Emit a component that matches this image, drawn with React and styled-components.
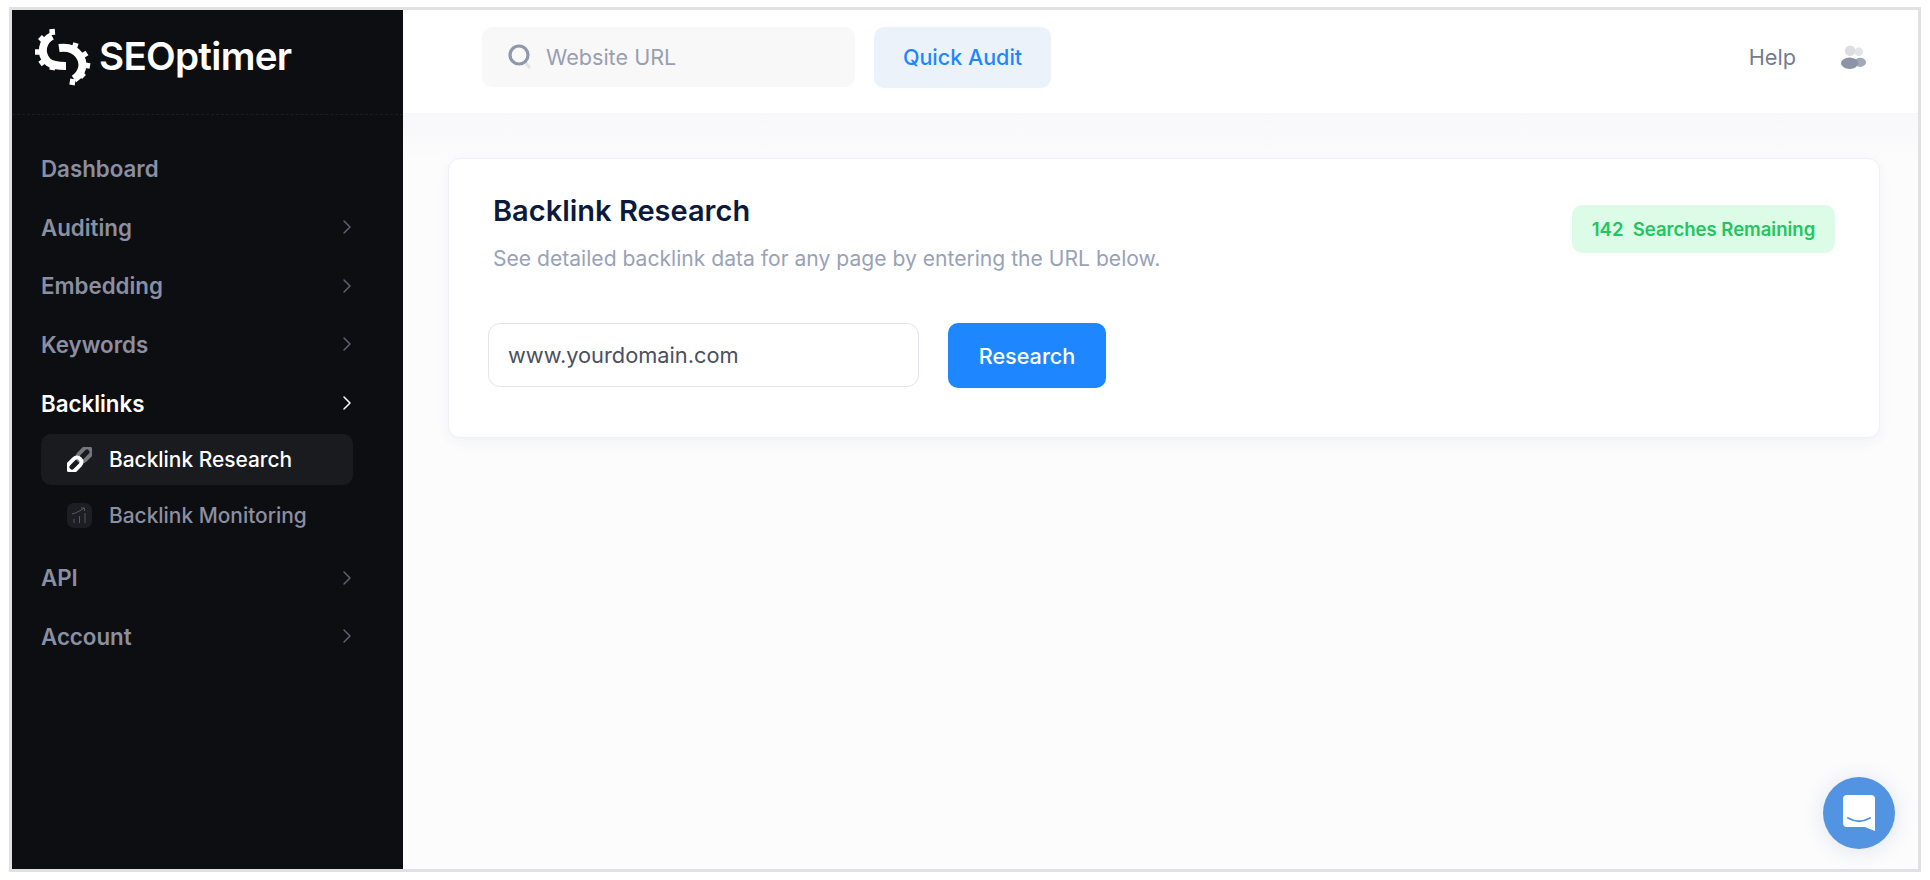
import React from "react";
import styled, { createGlobalStyle } from "styled-components";

const GlobalStyle = createGlobalStyle`
  html, body {
    margin: 0;
    padding: 0;
    background: #fff;
    font-family: Inter, "Liberation Sans", sans-serif;
  }
  * {
    box-sizing: border-box;
  }
`;

const navTop = [
  { label: "Dashboard" },
  { label: "Auditing", arrow: true },
  { label: "Embedding", arrow: true },
  { label: "Keywords", arrow: true },
];

const Chevron = ({ color }) => (
  <ChevronSvg viewBox="0 0 10 16" fill="none" stroke={color} strokeWidth="1.5">
    <path d="M2 2l6 6-6 6" strokeLinecap="round" strokeLinejoin="round" />
  </ChevronSvg>
);

const Logo = () => (
  <svg width="66" height="66" viewBox="0 0 66 66" fill="none" stroke="#fff">
    {/* upper left half gear */}
    <path d="M22 13C12 18 10 30 17 38c5 5 13 5 19 5" strokeWidth="8" />
    <path d="M22 6l.5 6M10 14l4 4M5 29h6M10 41l4-3M22 47l1-5" strokeWidth="5.5" />
    {/* lower right half gear */}
    <path d="M29 25c7-1 15 0 20 7 6 8 4 18-5 24" strokeWidth="8" />
    <path d="M46 20l-2 6M57 30l-5 3M60 43l-6-1M54 54l-4-4M42 62l1-6" strokeWidth="5.5" />
  </svg>
);

const LinkIcon = () => (
  <svg width="25" height="25" viewBox="0 0 25 25" fill="none" strokeWidth="4">
    <rect x="13" y="-0.5" width="9" height="16" rx="4.5" transform="rotate(45 17.5 7.5)" stroke="#75777e" />
    <rect x="3" y="9.5" width="9" height="16" rx="4.5" transform="rotate(45 7.5 17.5)" stroke="#fff" />
  </svg>
);

const MonitorIcon = () => (
  <MonitorBox>
    <svg width="17" height="17" viewBox="0 0 17 17" fill="none" stroke="#55575f" strokeWidth="1">
      <path d="M1 7c4-1 8-3 12-6M10 1h3.5v3" />
      <path d="M3 12v4M8.5 9v7M14 6v10" />
    </svg>
  </MonitorBox>
);

const SearchIcon = () => (
  <svg width="24" height="26" viewBox="0 0 24 26" fill="none">
    <path d="M17 18l5 6" stroke="#e1e3e8" strokeWidth="3" />
    <circle cx="11" cy="11" r="9" stroke="#9097a9" strokeWidth="3.2" />
  </svg>
);

const PeopleIcon = () => (
  <svg width="25" height="25" viewBox="0 0 26 25">
    <circle cx="18.5" cy="6.5" r="4.5" fill="#e3e4e8" />
    <ellipse cx="20" cy="17.5" rx="6" ry="4.8" fill="#a3a8b8" />
    <circle cx="9.5" cy="5.5" r="5.5" fill="#dcdde2" />
    <ellipse cx="9" cy="18.5" rx="9" ry="6" fill="#8e94a8" />
  </svg>
);

const ChatIcon = () => (
  <svg width="32" height="36" viewBox="0 0 32 36">
    <path d="M4 0h24a4 4 0 0 1 4 4v32l-10-4H4a4 4 0 0 1-4-4V4a4 4 0 0 1 4-4z" fill="#fff" />
    <path d="M5 23c7 4 15 4 22 0" fill="none" stroke="#5294e2" strokeWidth="2" strokeLinecap="round" />
  </svg>
);

function App() {
  return (
    <>
      <GlobalStyle />
      <Frame>
        <Sidebar>
          <Brand>
            <Logo />
            <BrandName>SEOptimer</BrandName>
          </Brand>
          <Nav>
            {navTop.map((item) => (
              <NavRow key={item.label}>
                {item.label}
                {item.arrow && <Chevron color="#5f6270" />}
              </NavRow>
            ))}
            <NavRow $active>
              Backlinks
              <Chevron color="#fff" />
            </NavRow>
            <SubList>
              <SubRow $active>
                <LinkIcon />
                Backlink Research
              </SubRow>
              <SubRow>
                <MonitorIcon />
                Backlink Monitoring
              </SubRow>
            </SubList>
            <NavRow>
              API
              <Chevron color="#5f6270" />
            </NavRow>
            <NavRow>
              Account
              <Chevron color="#5f6270" />
            </NavRow>
          </Nav>
        </Sidebar>
        <Content>
          <Header>
            <SearchBox>
              <SearchIcon />
              <SearchInput placeholder="Website URL" />
            </SearchBox>
            <AuditButton>Quick Audit</AuditButton>
            <HeaderRight>
              <HelpLink>Help</HelpLink>
              <PeopleIcon />
            </HeaderRight>
          </Header>
          <Main>
            <Card>
              <CardTop>
                <div>
                  <Title>Backlink Research</Title>
                  <Subtitle>See detailed backlink data for any page by entering the URL below.</Subtitle>
                </div>
                <Badge>142&nbsp; Searches Remaining</Badge>
              </CardTop>
              <FormRow>
                <UrlInput placeholder="www.yourdomain.com" />
                <ResearchButton>Research</ResearchButton>
              </FormRow>
            </Card>
          </Main>
          <ChatButton>
            <ChatIcon />
          </ChatButton>
        </Content>
      </Frame>
    </>
  );
}

const Frame = styled.div`
  display: flex;
  width: 1912px;
  height: 865px;
  margin: 7px 0 0 9px;
  border: 3px solid #e1e1e4;
  overflow: hidden;
`;

const Sidebar = styled.aside`
  flex: 0 0 391px;
  background: #0d0e12;
`;

const Brand = styled.div`
  display: flex;
  align-items: center;
  gap: 3px;
  height: 105px;
  padding: 0 0 12px 18px;
  border-bottom: 1px dashed #1b1c20;
`;

const BrandName = styled.span`
  color: #fff;
  font-family: Inter, sans-serif;
  font-size: 38.6px;
  font-weight: 600;
  letter-spacing: -0.7px;
`;

const Nav = styled.nav`
  display: flex;
  flex-direction: column;
  padding: 24px 50px 0 29px;
`;

const NavRow = styled.div`
  display: flex;
  align-items: center;
  justify-content: space-between;
  height: 58.7px;
  color: ${(p) => (p.$active ? "#fff" : "#8b8fa1")};
  font-size: 22.3px;
  font-weight: 600;
`;

const ChevronSvg = styled.svg`
  width: 10px;
  height: 16px;
  margin-right: 1px;
`;

const SubList = styled.div`
  display: flex;
  flex-direction: column;
  gap: 5px;
  margin: 2px 0 7px;
`;

const SubRow = styled.div`
  display: flex;
  align-items: center;
  gap: 17px;
  height: 51px;
  padding-left: 26px;
  border-radius: 10px;
  background: ${(p) => (p.$active ? "#1a1b1f" : "transparent")};
  color: ${(p) => (p.$active ? "#fff" : "#8b8fa1")};
  font-size: 20.9px;
  font-weight: 500;
`;

const MonitorBox = styled.div`
  display: flex;
  align-items: center;
  justify-content: center;
  width: 25px;
  height: 25px;
  border-radius: 7px;
  background: #1d1e23;
`;

const Content = styled.div`
  position: relative;
  flex: 1;
  display: flex;
  flex-direction: column;
  min-width: 0;
`;

const Header = styled.header`
  display: flex;
  align-items: center;
  gap: 19px;
  height: 103px;
  padding: 0 52px 9px 79px;
  background: #fff;
`;

const SearchBox = styled.div`
  display: flex;
  align-items: center;
  gap: 12px;
  width: 373px;
  height: 60px;
  padding-left: 26px;
  border-radius: 10px;
  background: #f8f8f9;
`;

const SearchInput = styled.input`
  flex: 1;
  min-width: 0;
  border: 0;
  outline: 0;
  background: transparent;
  font-family: inherit;
  font-size: 21.6px;
  &::placeholder {
    color: #989fb1;
    opacity: 1;
  }
`;

const AuditButton = styled.button`
  width: 177px;
  height: 61px;
  border: 0;
  border-radius: 10px;
  background: #ebf2fa;
  color: #1e87ff;
  font-family: inherit;
  font-size: 21.5px;
  font-weight: 500;
`;

const HeaderRight = styled.div`
  display: flex;
  align-items: center;
  gap: 45px;
  margin-left: auto;
`;

const HelpLink = styled.span`
  color: #747c91;
  font-size: 21.7px;
`;

const Main = styled.main`
  flex: 1;
  padding: 45px 38px 0 45px;
  background: linear-gradient(#f8f8fa 0, #fcfcfd 50px);
`;

const Card = styled.section`
  height: 280px;
  padding: 34px 44px 0 39px;
  border: 1px solid #eef1f6;
  border-radius: 12px;
  background: #fff;
  box-shadow: 0 4px 14px rgba(40, 50, 90, 0.05);
`;

const CardTop = styled.div`
  display: flex;
  align-items: flex-start;
  justify-content: space-between;
  padding-left: 5px;
`;

const Title = styled.h1`
  margin: 0;
  color: #0b1a3c;
  font-size: 29px;
  font-weight: 600;
  line-height: 36px;
`;

const Subtitle = styled.p`
  margin: 15px 0 0;
  color: #98a2b8;
  font-size: 21.1px;
  line-height: 30px;
`;

const Badge = styled.div`
  width: 263px;
  height: 48px;
  margin-top: 12px;
  border-radius: 10px;
  background: #dcfce8;
  color: #22c55e;
  font-size: 18.5px;
  font-weight: 600;
  line-height: 48px;
  text-align: center;
`;

const FormRow = styled.div`
  display: flex;
  gap: 29px;
  margin-top: 49px;
`;

const UrlInput = styled.input`
  width: 431px;
  height: 64px;
  padding: 0 19px;
  border: 1px solid #e3e4e9;
  border-radius: 12px;
  outline: 0;
  background: #fff;
  font-family: inherit;
  font-size: 21.8px;
  &::placeholder {
    color: #4a5060;
    opacity: 1;
  }
`;

const ResearchButton = styled.button`
  width: 158px;
  height: 65px;
  border: 0;
  border-radius: 10px;
  background: #1e87ff;
  color: #fff;
  font-family: inherit;
  font-size: 21.6px;
  font-weight: 500;
`;

const ChatButton = styled.div`
  position: absolute;
  right: 23px;
  bottom: 20px;
  display: flex;
  align-items: center;
  justify-content: center;
  width: 72px;
  height: 72px;
  border-radius: 50%;
  background: #5294e2;
  box-shadow: 0 2px 22px rgba(40, 60, 110, 0.13);
`;

export default App;
